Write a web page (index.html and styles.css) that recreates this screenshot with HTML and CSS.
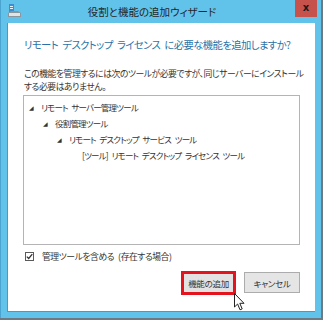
FILE: index.html
```html
<!DOCTYPE html>
<html lang="ja">
<head>
  <meta charset="UTF-8" />
  <title>役割と機能の追加ウィザード</title>
  <link rel="stylesheet" href="styles.css">
</head>
<body>
  <div class="window">
    <div class="titlebar">
      <svg class="app-icon" width="13" height="13" viewBox="0 0 13 13">
        <rect x="1" y="0" width="5" height="8" fill="#3b8fd0"/>
        <rect x="2" y="2" width="3" height="1" fill="#e8f4fc"/>
        <rect x="2" y="4" width="3" height="1" fill="#e8f4fc"/>
        <path d="M0 9 L3 7 L10 7 L13 9 L13 13 L0 13 Z" fill="#8a959c"/>
        <rect x="1" y="9" width="11" height="3" fill="#dfe4e7"/>
      </svg>
      <div class="title">役割と機能の追加ウィザード</div>
      <div class="close">x</div>
    </div>

    <div class="content">
      <h1 class="heading">リモート デスクトップ ライセンス に必要な機能を追加しますか?</h1>
      <p class="desc">この機能を管理するには次のツールが必要ですが、同じサーバーにインストール<br>する必要はありません。</p>

      <div class="tree">
        <div class="row lvl1"><span class="arrow">◢</span>リモート サーバー管理ツール</div>
        <div class="row lvl2"><span class="arrow">◢</span>役割管理ツール</div>
        <div class="row lvl3"><span class="arrow">◢</span>リモート デスクトップ サービス ツール</div>
        <div class="row lvl4">[ツール] リモート デスクトップ ライセンス ツール</div>
      </div>

      <label class="check">
        <span class="box">
          <svg width="7" height="7" viewBox="0 0 7 7"><path d="M0.8 3.6 L2.7 5.5 L6.3 1.2" fill="none" stroke="#333" stroke-width="1.3"/></svg>
        </span>
        管理ツールを含める (存在する場合)
      </label>

      <div class="actions">
        <button class="btn primary">機能の追加</button>
        <button class="btn">キャンセル</button>
      </div>
    </div>
  </div>

  <svg class="cursor" width="12" height="18" viewBox="0 0 12 18">
    <path d="M0.5 0.5 L0.5 14 L3.6 11 L6 16.8 L8.2 15.9 L5.8 10.3 L10 10.3 Z" fill="#fff" stroke="#222" stroke-width="1" stroke-linejoin="round"/>
  </svg>
</body>
</html>
```

FILE: styles.css
```css
body {
  margin: 0;
  width: 323px;
  height: 320px;
  background-color: #6d7a84;
  font-family: "Noto Sans CJK JP", sans-serif;
  font-feature-settings: "palt";
  color: #333;
  position: relative;
  overflow: hidden;
}

.window {
  width: 320px;
  height: 318px;
  background-color: #62c3ea;
  border-left: 1px solid #4aa4cf;
  display: flex;
  flex-direction: column;
}

.titlebar {
  height: 23px;
  display: flex;
  align-items: center;
  position: relative;
}

.app-icon {
  margin-left: 7px;
  margin-top: -2px;
}

.title {
  flex: 1;
  text-align: center;
  font-size: 10.5px;
  color: #262626;
  margin-left: -12px;
  margin-top: -1px;
}

.close {
  align-self: flex-start;
  width: 22px;
  height: 17px;
  margin-right: 4px;
  background-color: #c7514b;
  color: #1a1a1a;
  font-family: "DejaVu Sans", sans-serif;
  font-weight: bold;
  font-size: 10px;
  line-height: 15px;
  text-align: center;
}

.content {
  margin-left: 6px;
  width: 308px;
  height: 289px;
  background-color: #fff;
  box-sizing: border-box;
  padding: 16px 15px 0 15px;
  border-left: 1px solid #3f9ccc;
  border-bottom: 1px solid #3f9ccc;
}

.heading {
  margin: 0;
  padding-left: 1px;
  font-size: 10.3px;
  letter-spacing: -0.55px;
  word-spacing: 2.5px;
  font-weight: normal;
  line-height: 12px;
  color: #2a72a7;
  white-space: nowrap;
}

.desc {
  margin: 16px 0 0 1px;
  font-size: 8.8px;
  letter-spacing: -0.45px;
  line-height: 13px;
  white-space: nowrap;
}

.tree {
  margin-top: 2px;
  height: 150px;
  box-sizing: border-box;
  border: 1px solid #b4b4b4;
  padding-top: 3px;
}

.row {
  display: flex;
  align-items: center;
  height: 16px;
  font-size: 8.5px;
  letter-spacing: -0.8px;
  word-spacing: 2.5px;
  white-space: pre;
}

.arrow {
  font-size: 6px;
  width: 12px;
  letter-spacing: 0;
  color: #333;
  font-family: "DejaVu Sans", sans-serif;
}

.lvl1 { padding-left: 5px; }
.lvl2 { padding-left: 19px; }
.lvl3 { padding-left: 33px; }
.lvl4 { padding-left: 58px; }

.check {
  display: flex;
  align-items: center;
  height: 12px;
  margin-top: 5px;
  padding-left: 2px;
  font-size: 8.8px;
  letter-spacing: -0.45px;
  word-spacing: 2.5px;
}

.box {
  width: 7px;
  height: 7px;
  border: 1px solid #5a5a5a;
  margin-right: 8px;
  display: flex;
  align-items: center;
  justify-content: center;
}

.actions {
  display: flex;
  justify-content: flex-end;
  gap: 8px;
  margin-top: 9px;
  align-items: flex-start;
}

.btn {
  width: 56px;
  height: 21px;
  margin-top: 1px;
  padding: 0;
  background-color: #e5e5e5;
  border: 1px solid #acacac;
  font-family: inherit;
  font-feature-settings: "palt";
  font-size: 8.5px;
  letter-spacing: -0.3px;
  color: #333;
}

.btn.primary {
  width: 55px;
  height: 24px;
  margin-top: 0;
  border: 3px solid #e3141e;
  background-color: #e2e2e2;
}

.cursor {
  position: absolute;
  left: 234px;
  top: 293px;
}
```
